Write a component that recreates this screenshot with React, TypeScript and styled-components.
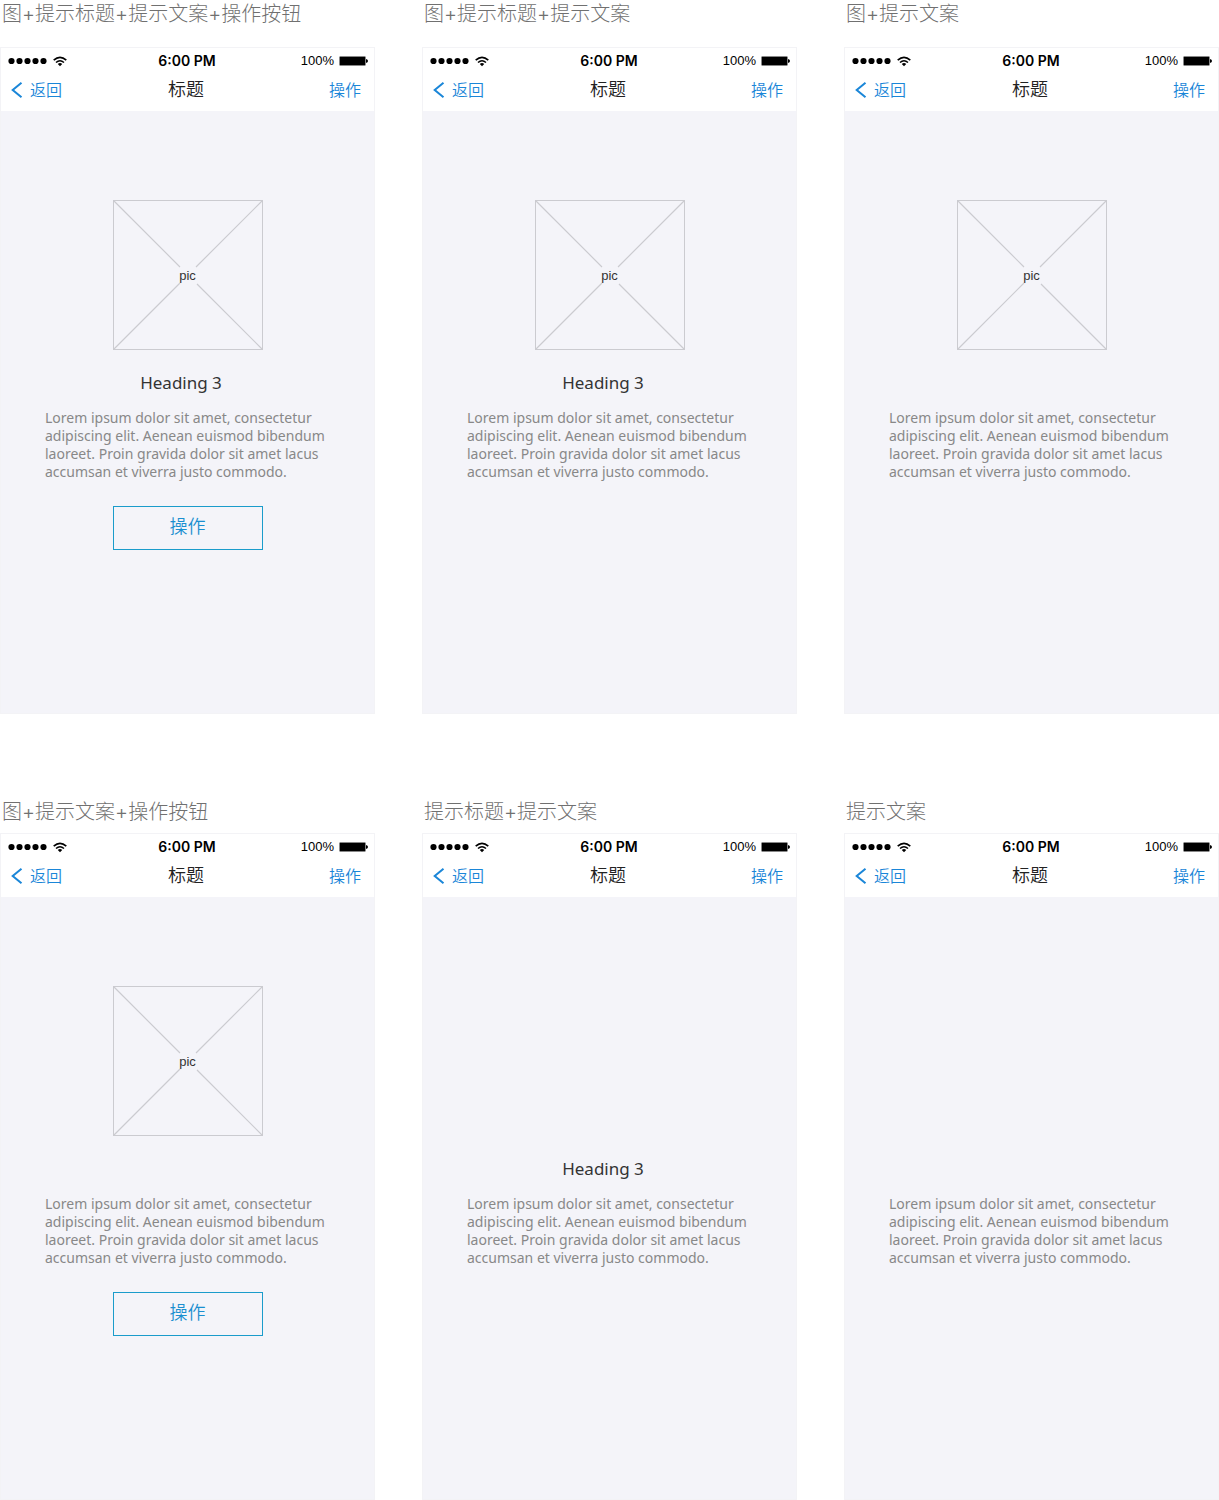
import React from "react";
import styled, { createGlobalStyle } from "styled-components";

const sans = `"Noto Sans", "Noto Sans CJK SC", sans-serif`;
const cjk = `Inter, "Noto Sans CJK SC", sans-serif`;

const GlobalStyle = createGlobalStyle`
  *, *::before, *::after { box-sizing: border-box; }
  body { margin: 0; background: #fff; font-family: ${sans}; }
  h1, h2, h3, p { margin: 0; font-weight: 400; }
  button { margin: 0; padding: 0; border: 0; background: none; cursor: pointer; }
`;

const Board = styled.main`
  display: flex;
  flex-direction: column;
  gap: 84px;
`;

const BoardRow = styled.div<{ $labelGap: number }>`
  display: grid;
  grid-template-columns: repeat(3, minmax(0, 1fr));
  column-gap: 47px;

  & > section {
    row-gap: ${(p) => p.$labelGap}px;
  }
`;

const Specimen = styled.section`
  display: flex;
  flex-direction: column;
`;

const SpecimenLabel = styled.h2`
  padding-left: 2px;
  font-family: ${cjk};
  font-size: 20px;
  font-weight: 300;
  line-height: 28px;
  white-space: nowrap;
  color: #707070;
`;

const Phone = styled.article`
  display: flex;
  flex-direction: column;
  border: 1px solid #f3f3f6;
  background: #f4f4f9;
`;

const PhoneTop = styled.header`
  background: #fff;
`;

const StatusBar = styled.div`
  display: grid;
  grid-template-columns: 1fr auto 1fr;
  align-items: center;
  height: 26px;
  padding: 0 6px 0 7px;
  color: #000;
`;

const StatusSide = styled.div<{ $end?: boolean }>`
  display: flex;
  align-items: center;
  justify-content: ${(p) => (p.$end ? "flex-end" : "flex-start")};
  gap: 5px;
  font-family: "Liberation Sans", Arial, sans-serif;
  font-size: 13px;
  line-height: 16px;
`;

const Clock = styled.time`
  padding-right: 2px;
  font-family: Inter, sans-serif;
  font-size: 14px;
  font-weight: 600;
  line-height: 16px;
`;

const NavBar = styled.nav`
  display: grid;
  grid-template-columns: 1fr auto 1fr;
  align-items: center;
  height: 37px;
  padding: 0 13px 6px 10px;
`;

const NavButton = styled.button<{ $end?: boolean }>`
  display: inline-flex;
  align-items: center;
  justify-self: ${(p) => (p.$end ? "end" : "start")};
  gap: 7px;
  font-family: ${cjk};
  font-size: 16px;
  font-weight: 350;
  line-height: 24px;
  color: #1a86d8;
`;

const NavTitle = styled.h1`
  font-family: ${cjk};
  font-size: 18px;
  font-weight: 350;
  line-height: 26px;
  color: #222;
`;

const PhoneBody = styled.div`
  display: flex;
  flex-direction: column;
  align-items: center;
  min-height: 602px;
  padding: 89px 44px 0;
`;

const PictureSlot = styled.div`
  width: 150px;
  height: 150px;
`;

const Picture = styled.div`
  display: grid;
  place-items: center;
  height: 100%;

  & > * {
    grid-area: 1 / 1;
  }
`;

const PictureName = styled.span`
  padding-top: 2px;
  font-family: "Liberation Sans", Arial, sans-serif;
  font-size: 13px;
  line-height: 16px;
  color: #333;
`;

const HeadingSlot = styled.div`
  width: 100%;
  height: 24px;
  margin: 21px 0 14px;
  padding-right: 13px;
  text-align: center;
`;

const Heading = styled.h3`
  font-size: 17px;
  line-height: 24px;
  color: #333;
`;

const Message = styled.p`
  width: 100%;
  font-size: 14px;
  line-height: 18px;
  color: #888;
`;

const ActionButton = styled.button`
  && {
    width: 150px;
    height: 44px;
    margin-top: 25px;
    padding-bottom: 2px;
    border: 1px solid #1a9ccb;
  }
  font-family: ${cjk};
  font-size: 18px;
  font-weight: 350;
  line-height: 26px;
  color: #1a8fd0;
`;

const SignalDots = () => (
  <svg width="40" height="8" viewBox="0 0 40 8" aria-hidden="true">
    {[3, 11, 19, 27, 35].map((x) => (
      <circle key={x} cx={x + 0.5} cy="4" r="3.1" />
    ))}
  </svg>
);

const WifiIcon = () => (
  <svg width="14" height="11" viewBox="0 0 14 11" fill="none" stroke="#000" aria-hidden="true">
    <path d="M0.7 4.2Q7 -1.6 13.3 4.2" strokeWidth="1.6" />
    <path d="M3 6.5Q7 2.9 11 6.5" strokeWidth="1.5" />
    <path d="M4.8 8Q7 6.2 9.2 8L7 10.3Z" fill="#000" stroke="none" />
  </svg>
);

const BatteryIcon = () => (
  <svg width="29" height="10" viewBox="0 0 29 10" aria-hidden="true">
    <rect x="0.5" y="0.5" width="26" height="9" rx="1" fill="#000" stroke="#888" />
    <path d="M27 3Q29 3.5 29 5Q29 6.5 27 7Z" />
  </svg>
);

const BackIcon = () => (
  <svg width="12" height="16" viewBox="0 0 12 16" fill="none" stroke="#1a86d8" strokeWidth="2" aria-hidden="true">
    <path d="M10.5 0.8L1.7 8L10.5 15.2" />
  </svg>
);

const PictureFrame = () => (
  <svg width="150" height="150" viewBox="0 0 150 150" fill="none" stroke="#cbcbd0" aria-hidden="true">
    <rect x="0.5" y="0.5" width="149" height="149" />
    <path d="M0.5 0.5L67 67M149.5 0.5L83 67M0.5 149.5L67 83M149.5 149.5L84 84" strokeWidth="1.2" />
  </svg>
);

type Screen = {
  label: string;
  picture?: boolean;
  heading?: boolean;
  action?: boolean;
};

const rows: { labelGap: number; screens: Screen[] }[] = [
  {
    labelGap: 19,
    screens: [
      { label: "图+提示标题+提示文案+操作按钮", picture: true, heading: true, action: true },
      { label: "图+提示标题+提示文案", picture: true, heading: true },
      { label: "图+提示文案", picture: true },
    ],
  },
  {
    labelGap: 7,
    screens: [
      { label: "图+提示文案+操作按钮", picture: true, action: true },
      { label: "提示标题+提示文案", heading: true },
      { label: "提示文案" },
    ],
  },
];

const EmptyState = ({ label, picture, heading, action }: Screen) => (
  <Specimen>
    <SpecimenLabel>{label}</SpecimenLabel>
    <Phone>
      <PhoneTop>
        <StatusBar>
          <StatusSide>
            <SignalDots />
            <WifiIcon />
          </StatusSide>
          <Clock>6:00 PM</Clock>
          <StatusSide $end>
            <span>100%</span>
            <BatteryIcon />
          </StatusSide>
        </StatusBar>
        <NavBar>
          <NavButton type="button">
            <BackIcon />
            返回
          </NavButton>
          <NavTitle>标题</NavTitle>
          <NavButton type="button" $end>
            操作
          </NavButton>
        </NavBar>
      </PhoneTop>
      <PhoneBody>
        <PictureSlot>
          {picture && (
            <Picture>
              <PictureFrame />
              <PictureName>pic</PictureName>
            </Picture>
          )}
        </PictureSlot>
        <HeadingSlot>{heading && <Heading>Heading 3</Heading>}</HeadingSlot>
        <Message>
          Lorem ipsum dolor sit amet, consectetur adipiscing elit. Aenean euismod bibendum laoreet.
          Proin gravida dolor sit amet lacus accumsan et viverra justo commodo.
        </Message>
        {action && <ActionButton type="button">操作</ActionButton>}
      </PhoneBody>
    </Phone>
  </Specimen>
);

export default function App() {
  return (
    <>
      <GlobalStyle />
      <Board>
        {rows.map((row) => (
          <BoardRow key={row.labelGap} $labelGap={row.labelGap}>
            {row.screens.map((screen) => (
              <EmptyState key={screen.label} {...screen} />
            ))}
          </BoardRow>
        ))}
      </Board>
    </>
  );
}
